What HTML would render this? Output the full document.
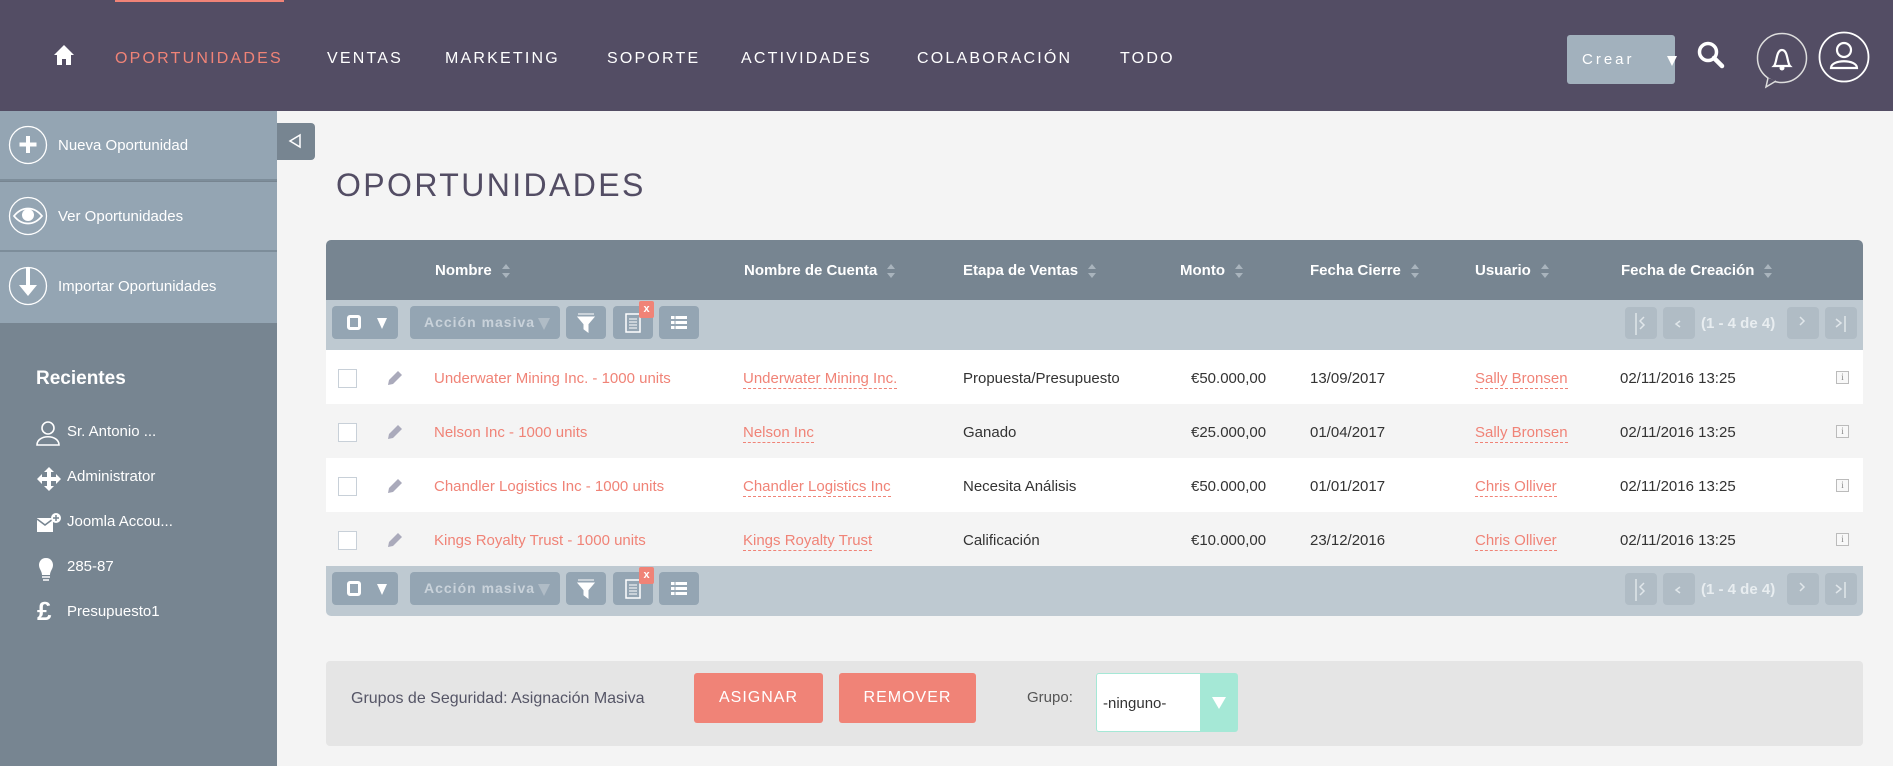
<!DOCTYPE html>
<html><head><meta charset="utf-8">
<style>
*{margin:0;padding:0;box-sizing:border-box}
body{width:1893px;height:766px;overflow:hidden;background:#f4f4f4;font-family:"Liberation Sans",sans-serif;position:relative}
.a{position:absolute}
.nav{left:0;top:0;width:1893px;height:111px;background:#534d64}
.ni{top:50px;font-size:16px;letter-spacing:2.2px;color:#fff;white-space:nowrap}
.side{left:0;top:111px;width:277px;height:655px;background:#778591}
.si{left:0;width:277px;height:70px;background:#94a5b3;border-bottom:2px solid #7d8d9a}
.si span{position:absolute;left:58px;top:26px;color:#fff;font-size:15px}
.si svg{position:absolute;left:8px;top:14px}
.rc{left:37px;color:#fff;font-size:15px}
.th{top:240px;left:326px;width:1537px;height:60px;background:#778591;border-radius:5px 5px 0 0}
.hl{top:262px;color:#fff;font-weight:bold;font-size:15px;white-space:nowrap}
.sa{display:inline-block;margin-left:10px;vertical-align:middle;width:8px;height:14px;position:relative}
.sa:before{content:"";position:absolute;top:0;left:0;border-left:4px solid transparent;border-right:4px solid transparent;border-bottom:5px solid #a9b4bd}
.sa:after{content:"";position:absolute;bottom:0;left:0;border-left:4px solid transparent;border-right:4px solid transparent;border-top:5px solid #a9b4bd}
.tb{left:326px;width:1537px;height:50px;background:#bec9d1}
.bt{height:33px;background:#94a5b3;border-radius:4px}
.row{left:326px;width:1537px;height:54px}
.c{font-size:15px;color:#333;white-space:nowrap}
.lk{color:#f08377}
.ul{color:#f08377;border-bottom:1px dashed #f08377;padding-bottom:1px}
.cb{width:19px;height:19px;border:1px solid #c8d0d8;background:#fff}
.pg{width:32px;height:32px;background:#b0bcc5;border-radius:4px}
</style></head><body>
<div class="a nav"></div>
<div class="a" style="left:115px;top:0;width:169px;height:2px;background:#f08377"></div>
<svg class="a" style="left:52px;top:44px" width="24" height="22" viewBox="0 0 24 22"><path d="M12 1L2 11h3v10h5v-6h4v6h5V11h3z" fill="#fff"/></svg>
<div class="a ni" style="left:115px;color:#f08377">OPORTUNIDADES</div>
<div class="a ni" style="left:327px">VENTAS</div>
<div class="a ni" style="left:445px">MARKETING</div>
<div class="a ni" style="left:607px">SOPORTE</div>
<div class="a ni" style="left:741px">ACTIVIDADES</div>
<div class="a ni" style="left:917px">COLABORACIÓN</div>
<div class="a ni" style="left:1120px">TODO</div>
<div class="a" style="left:1567px;top:35px;width:108px;height:49px;background:#a2b1bd;border-radius:3px"></div>
<div class="a" style="left:1582px;top:51px;color:#fff;font-size:15px;letter-spacing:3px">Crear</div>
<div class="a" style="left:1667px;top:56px;border-left:5px solid transparent;border-right:5px solid transparent;border-top:10px solid #fff"></div>
<svg class="a" style="left:1696px;top:40px" width="34" height="32"><circle cx="12" cy="12" r="8.5" fill="none" stroke="#fff" stroke-width="3.5"/><path d="M18 18l8 8" stroke="#fff" stroke-width="4.5" stroke-linecap="round"/></svg>
<svg class="a" style="left:1754px;top:30px" width="120" height="60"><circle cx="28" cy="28" r="24.5" fill="none" stroke="#ddd" stroke-width="1.5"/><path d="M14 48l-2 9 10-6" fill="#534d64" stroke="#ddd" stroke-width="1.5"/><path d="M20 36c3-3 2-16 8-16s5 13 8 16z" fill="none" stroke="#fff" stroke-width="2.2"/><circle cx="28" cy="38" r="2.5" fill="#fff"/><circle cx="90" cy="27" r="24.5" fill="none" stroke="#fff" stroke-width="1.8"/><circle cx="90" cy="20" r="7" fill="none" stroke="#fff" stroke-width="2.2"/><path d="M77 38c0-9 26-9 26 0z" fill="none" stroke="#fff" stroke-width="2.2"/></svg>

<div class="a side"></div>
<div class="a si" style="top:111px"><svg width="40" height="40"><circle cx="20" cy="20" r="18.5" fill="none" stroke="#fff" stroke-width="1.3"/><path d="M20 11v17M11.5 19.5h17" stroke="#fff" stroke-width="4"/></svg><span>Nueva Oportunidad</span></div>
<div class="a si" style="top:182px"><svg width="40" height="40"><circle cx="20" cy="20" r="18.5" fill="none" stroke="#fff" stroke-width="1.3"/><path d="M6 20c8-10 20-10 28 0c-8 10-20 10-28 0z" fill="none" stroke="#fff" stroke-width="1.8"/><circle cx="20" cy="19" r="6" fill="#fff"/></svg><span>Ver Oportunidades</span></div>
<div class="a si" style="top:252px;height:71px;border:0"><svg width="40" height="40"><circle cx="20" cy="20" r="18.5" fill="none" stroke="#fff" stroke-width="1.3"/><path d="M20 2v19" stroke="#fff" stroke-width="4"/><path d="M11 19h18l-9 11z" fill="#fff"/></svg><span>Importar Oportunidades</span></div>
<div class="a" style="left:277px;top:123px;width:38px;height:37px;background:#778591;border-radius:0 4px 4px 0"></div>
<svg class="a" style="left:288px;top:133px" width="14" height="16"><path d="M12 2L2 8l10 6z" fill="none" stroke="#fff" stroke-width="1.5"/></svg>
<div class="a" style="left:36px;top:368px;color:#fff;font-size:19px;font-weight:bold">Recientes</div>
<svg class="a" style="left:36px;top:420px" width="25" height="26"><circle cx="12" cy="8" r="6" fill="none" stroke="#fff" stroke-width="1.6"/><path d="M1 25c0-11 22-11 22 0z" fill="none" stroke="#fff" stroke-width="1.6"/></svg>
<div class="a rc" style="left:67px;top:423px">Sr. Antonio ...</div>
<svg class="a" style="left:36px;top:466px" width="26" height="26"><path d="M13 1l5 5h-3v5h5V8l5 5-5 5v-3h-5v5h3l-5 5-5-5h3v-5H6v3l-5-5 5-5v3h5V6H8z" fill="#fff"/></svg>
<div class="a rc" style="left:67px;top:468px">Administrator</div>
<svg class="a" style="left:36px;top:512px" width="26" height="22"><path d="M1 6h16v14H1z" fill="#fff"/><path d="M1 7l8 6 8-6" fill="none" stroke="#778591" stroke-width="1.5"/><circle cx="20" cy="6" r="5" fill="#fff"/><path d="M20 3v6M17 6h6" stroke="#778591" stroke-width="1.5"/></svg>
<div class="a rc" style="left:67px;top:513px">Joomla Accou...</div>
<svg class="a" style="left:38px;top:557px" width="18" height="26"><path d="M8 1c5 0 7 4 7 7 0 4-3 6-3 10H4c0-4-3-6-3-10 0-3 2-7 7-7z" fill="#fff"/><path d="M4 20h8M5 23h6" stroke="#fff" stroke-width="1.5"/></svg>
<div class="a rc" style="left:67px;top:558px">285-87</div>
<div class="a" style="left:37px;top:596px;color:#fff;font-size:26px;font-weight:bold">£</div>
<div class="a rc" style="left:67px;top:603px">Presupuesto1</div>

<div class="a" style="left:336px;top:167px;font-size:32px;letter-spacing:2.4px;color:#534d64">OPORTUNIDADES</div>

<div class="a th"></div>
<div class="a hl" style="left:435px">Nombre<i class="sa"></i></div>
<div class="a hl" style="left:744px">Nombre de Cuenta<i class="sa"></i></div>
<div class="a hl" style="left:963px">Etapa de Ventas<i class="sa"></i></div>
<div class="a hl" style="left:1180px">Monto<i class="sa"></i></div>
<div class="a hl" style="left:1310px">Fecha Cierre<i class="sa"></i></div>
<div class="a hl" style="left:1475px">Usuario<i class="sa"></i></div>
<div class="a hl" style="left:1621px">Fecha de Creación<i class="sa"></i></div>

<div class="a tb" style="top:300px"></div>
<div class="a tb" style="top:566px;border-radius:0 0 5px 5px"></div>

<div class="a row" style="top:350px;background:#fff"></div>
<div class="a row" style="top:404px;background:#f4f4f4"></div>
<div class="a row" style="top:458px;background:#fff"></div>
<div class="a row" style="top:512px;background:#f4f4f4"></div>

<div class="a cb" style="left:338px;top:369px"></div><div class="a cb" style="left:338px;top:423px"></div><div class="a cb" style="left:338px;top:477px"></div><div class="a cb" style="left:338px;top:531px"></div>
<svg class="a" style="left:385px;top:368px" width="20" height="20"><path d="M3 17l1-5 9-9 4 4-9 9z" fill="#aab"/></svg>
<svg class="a" style="left:385px;top:422px" width="20" height="20"><path d="M3 17l1-5 9-9 4 4-9 9z" fill="#aab"/></svg>
<svg class="a" style="left:385px;top:476px" width="20" height="20"><path d="M3 17l1-5 9-9 4 4-9 9z" fill="#aab"/></svg>
<svg class="a" style="left:385px;top:530px" width="20" height="20"><path d="M3 17l1-5 9-9 4 4-9 9z" fill="#aab"/></svg>

<div class="a c lk" style="left:434px;top:370px">Underwater Mining Inc. - 1000 units</div>
<div class="a c" style="left:743px;top:370px"><span class="ul">Underwater Mining Inc.</span></div>
<div class="a c" style="left:963px;top:370px">Propuesta/Presupuesto</div>
<div class="a c" style="left:1191px;top:370px">€50.000,00</div>
<div class="a c" style="left:1310px;top:370px">13/09/2017</div>
<div class="a c" style="left:1475px;top:370px"><span class="ul">Sally Bronsen</span></div>
<div class="a c" style="left:1620px;top:370px">02/11/2016 13:25</div>

<div class="a c lk" style="left:434px;top:424px">Nelson Inc - 1000 units</div>
<div class="a c" style="left:743px;top:424px"><span class="ul">Nelson Inc</span></div>
<div class="a c" style="left:963px;top:424px">Ganado</div>
<div class="a c" style="left:1191px;top:424px">€25.000,00</div>
<div class="a c" style="left:1310px;top:424px">01/04/2017</div>
<div class="a c" style="left:1475px;top:424px"><span class="ul">Sally Bronsen</span></div>
<div class="a c" style="left:1620px;top:424px">02/11/2016 13:25</div>

<div class="a c lk" style="left:434px;top:478px">Chandler Logistics Inc - 1000 units</div>
<div class="a c" style="left:743px;top:478px"><span class="ul">Chandler Logistics Inc</span></div>
<div class="a c" style="left:963px;top:478px">Necesita Análisis</div>
<div class="a c" style="left:1191px;top:478px">€50.000,00</div>
<div class="a c" style="left:1310px;top:478px">01/01/2017</div>
<div class="a c" style="left:1475px;top:478px"><span class="ul">Chris Olliver</span></div>
<div class="a c" style="left:1620px;top:478px">02/11/2016 13:25</div>

<div class="a c lk" style="left:434px;top:532px">Kings Royalty Trust - 1000 units</div>
<div class="a c" style="left:743px;top:532px"><span class="ul">Kings Royalty Trust</span></div>
<div class="a c" style="left:963px;top:532px">Calificación</div>
<div class="a c" style="left:1191px;top:532px">€10.000,00</div>
<div class="a c" style="left:1310px;top:532px">23/12/2016</div>
<div class="a c" style="left:1475px;top:532px"><span class="ul">Chris Olliver</span></div>
<div class="a c" style="left:1620px;top:532px">02/11/2016 13:25</div>

<div class="a" style="left:1836px;top:371px;width:13px;height:13px;border:1px solid #bbb;background:#f8f8f8;font-size:9px;color:#888;text-align:center;line-height:11px;font-family:'Liberation Serif',serif">i</div>
<div class="a" style="left:1836px;top:425px;width:13px;height:13px;border:1px solid #bbb;background:#f8f8f8;font-size:9px;color:#888;text-align:center;line-height:11px;font-family:'Liberation Serif',serif">i</div>
<div class="a" style="left:1836px;top:479px;width:13px;height:13px;border:1px solid #bbb;background:#f8f8f8;font-size:9px;color:#888;text-align:center;line-height:11px;font-family:'Liberation Serif',serif">i</div>
<div class="a" style="left:1836px;top:533px;width:13px;height:13px;border:1px solid #bbb;background:#f8f8f8;font-size:9px;color:#888;text-align:center;line-height:11px;font-family:'Liberation Serif',serif">i</div>

<div class="a bt" style="left:332px;top:306px;width:66px"></div>
<div class="a" style="left:347px;top:315px;width:14px;height:15px;border:3px solid #fff;border-radius:3px"></div>
<div class="a" style="left:377px;top:318px;border-left:5px solid transparent;border-right:5px solid transparent;border-top:11px solid #fff"></div>
<div class="a bt" style="left:410px;top:306px;width:150px"></div>
<div class="a" style="left:424px;top:314px;color:#c9d2da;font-size:14px;font-weight:bold;letter-spacing:1px">Acción masiva</div>
<div class="a" style="left:538px;top:318px;border-left:6px solid transparent;border-right:6px solid transparent;border-top:12px solid #b0bcc6"></div>
<div class="a bt" style="left:566px;top:306px;width:40px"></div>
<svg class="a" style="left:576px;top:313px" width="20" height="20"><path d="M2 1h16M2 4h16l-6 7v8l-4-3v-5z" stroke="#fff" fill="#fff" stroke-width="1"/></svg>
<div class="a bt" style="left:613px;top:306px;width:40px"></div>
<svg class="a" style="left:625px;top:313px" width="16" height="20"><rect x="1" y="1" width="14" height="18" fill="none" stroke="#fff" stroke-width="1.5"/><path d="M4 6h8M4 9h8M4 12h8M4 15h8" stroke="#fff"/></svg>
<div class="a" style="left:639px;top:301px;width:15px;height:17px;background:#f08377;border-radius:2px;color:#fff;font-size:11px;text-align:center;line-height:16px;font-weight:bold">x</div>
<div class="a bt" style="left:659px;top:306px;width:40px"></div>
<svg class="a" style="left:670px;top:314px" width="18" height="18"><path d="M1 2h16v3H1zM1 7h16v3H1zM1 12h16v3H1z" fill="#fff"/><path d="M5 1v16" stroke="#94a5b3" stroke-width="1"/></svg>

<div class="a bt" style="left:332px;top:572px;width:66px"></div>
<div class="a" style="left:347px;top:581px;width:14px;height:15px;border:3px solid #fff;border-radius:3px"></div>
<div class="a" style="left:377px;top:584px;border-left:5px solid transparent;border-right:5px solid transparent;border-top:11px solid #fff"></div>
<div class="a bt" style="left:410px;top:572px;width:150px"></div>
<div class="a" style="left:424px;top:580px;color:#c9d2da;font-size:14px;font-weight:bold;letter-spacing:1px">Acción masiva</div>
<div class="a" style="left:538px;top:584px;border-left:6px solid transparent;border-right:6px solid transparent;border-top:12px solid #b0bcc6"></div>
<div class="a bt" style="left:566px;top:572px;width:40px"></div>
<svg class="a" style="left:576px;top:579px" width="20" height="20"><path d="M2 1h16M2 4h16l-6 7v8l-4-3v-5z" stroke="#fff" fill="#fff" stroke-width="1"/></svg>
<div class="a bt" style="left:613px;top:572px;width:40px"></div>
<svg class="a" style="left:625px;top:579px" width="16" height="20"><rect x="1" y="1" width="14" height="18" fill="none" stroke="#fff" stroke-width="1.5"/><path d="M4 6h8M4 9h8M4 12h8M4 15h8" stroke="#fff"/></svg>
<div class="a" style="left:639px;top:567px;width:15px;height:17px;background:#f08377;border-radius:2px;color:#fff;font-size:11px;text-align:center;line-height:16px;font-weight:bold">x</div>
<div class="a bt" style="left:659px;top:572px;width:40px"></div>
<svg class="a" style="left:670px;top:580px" width="18" height="18"><path d="M1 2h16v3H1zM1 7h16v3H1zM1 12h16v3H1z" fill="#fff"/><path d="M5 1v16" stroke="#94a5b3" stroke-width="1"/></svg>

<div class="a pg" style="left:1625px;top:307px"></div><div class="a pg" style="left:1663px;top:307px"></div>
<div class="a pg" style="left:1787px;top:307px"></div><div class="a pg" style="left:1825px;top:307px"></div>
<div class="a" style="left:1701px;top:315px;color:#e8edf0;font-size:15px;font-weight:bold">(1 - 4 de 4)</div>
<div class="a pg" style="left:1625px;top:573px"></div><div class="a pg" style="left:1663px;top:573px"></div>
<div class="a pg" style="left:1787px;top:573px"></div><div class="a pg" style="left:1825px;top:573px"></div>
<div class="a" style="left:1701px;top:581px;color:#e8edf0;font-size:15px;font-weight:bold">(1 - 4 de 4)</div>
<svg class="a" style="left:1625px;top:307px" width="240" height="32"><g stroke="#e0e6ea" stroke-width="1.5" fill="none"><path d="M11 6v22M19 10l-4 4 4 4-4 4"/><path d="M55 14l-4 3 4 3"/><path d="M175 10l4 4-4 4"/><path d="M211 12l5 4-5 4M220 9v16"/></g></svg>
<svg class="a" style="left:1625px;top:573px" width="240" height="32"><g stroke="#e0e6ea" stroke-width="1.5" fill="none"><path d="M11 6v22M19 10l-4 4 4 4-4 4"/><path d="M55 14l-4 3 4 3"/><path d="M175 10l4 4-4 4"/><path d="M211 12l5 4-5 4M220 9v16"/></g></svg>

<div class="a" style="left:326px;top:661px;width:1537px;height:85px;background:#e5e5e5;border-radius:4px"></div>
<div class="a" style="left:351px;top:690px;font-size:16px;color:#555566">Grupos de Seguridad: Asignación Masiva</div>
<div class="a" style="left:694px;top:673px;width:129px;height:50px;background:#f08377;border-radius:3px;color:#fff;font-size:16px;letter-spacing:1px;text-align:center;line-height:50px">ASIGNAR</div>
<div class="a" style="left:839px;top:673px;width:137px;height:50px;background:#f08377;border-radius:3px;color:#fff;font-size:16px;letter-spacing:1px;text-align:center;line-height:50px">REMOVER</div>
<div class="a" style="left:1027px;top:689px;font-size:15px;color:#555">Grupo:</div>
<div class="a" style="left:1096px;top:673px;width:142px;height:59px;background:#fff;border:1px solid #a5e8d6;border-radius:3px"></div>
<div class="a" style="left:1200px;top:674px;width:37px;height:57px;background:#a5e8d6"></div>
<div class="a" style="left:1212px;top:697px;border-left:7px solid transparent;border-right:7px solid transparent;border-top:12px solid #fff"></div>
<div class="a" style="left:1103px;top:695px;font-size:15px;color:#333">-ninguno-</div>
</body></html>
